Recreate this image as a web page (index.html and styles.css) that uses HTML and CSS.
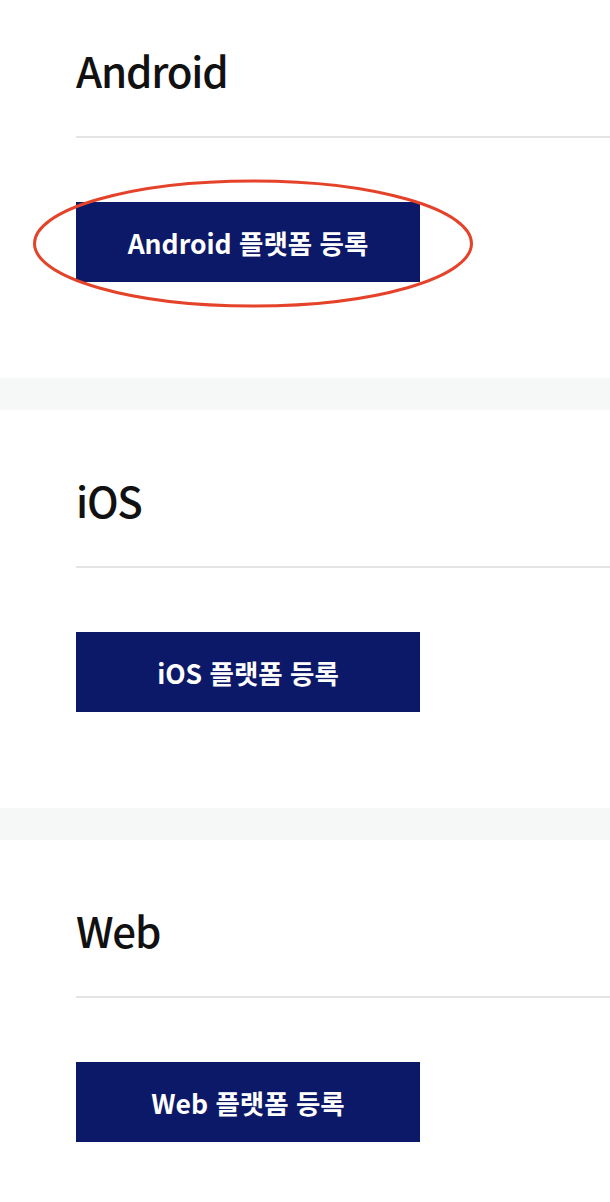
FILE: index.html
```html
<!DOCTYPE html>
<html lang="ko">

<head>
    <meta charset="UTF-8">
    <meta name="viewport" content="width=device-width, initial-scale=1.0">
    <title>플랫폼 등록</title>
    <link rel="stylesheet" href="styles.css">
</head>

<body>
    <div class="page">
        <section class="platform first">
            <h2 class="platform-title">Android</h2>
            <hr class="divider">
            <div class="btn-wrap">
                <button class="btn-register" type="button">Android 플랫폼 등록</button>
                <svg class="mark" width="442" height="131" viewBox="0 0 442 131">
                    <ellipse cx="221" cy="65.5" rx="218.5" ry="62.5" fill="none" stroke="#e4432a" stroke-width="3" />
                </svg>
            </div>
        </section>

        <section class="platform">
            <h2 class="platform-title">iOS</h2>
            <hr class="divider">
            <div class="btn-wrap">
                <button class="btn-register" type="button">iOS 플랫폼 등록</button>
            </div>
        </section>

        <section class="platform">
            <h2 class="platform-title">Web</h2>
            <hr class="divider">
            <div class="btn-wrap">
                <button class="btn-register" type="button">Web 플랫폼 등록</button>
            </div>
        </section>
    </div>
</body>

</html>
```

FILE: styles.css
```css
body {
    margin: 0;
    padding: 0;
    background: #f6f7f7;
    font-family: "Noto Sans CJK KR", "Noto Sans", sans-serif;
}

.page {
    display: flex;
    flex-direction: column;
    gap: 32px;
}

.platform {
    background: #ffffff;
    padding: 66px 0 96px 76px;
}

/* 첫 섹션은 위쪽이 스크롤로 잘려 있음 */
.platform.first {
    padding-top: 46px;
}

.platform-title {
    margin: 0;
    font-size: 42px;
    line-height: 48px;
    font-weight: 500;
    letter-spacing: -1.2px;
    color: #111111;
}

.divider {
    margin: 42px 0 0;
    border: 0;
    height: 2px;
    background: #e4e4e4;
}

.btn-wrap {
    position: relative;
    width: 344px;
    margin-top: 64px;
}

.btn-register {
    display: block;
    width: 344px;
    height: 80px;
    border: 0;
    padding: 0;
    background: #0c1968;
    color: #ffffff;
    font-family: "Noto Sans CJK KR", "Noto Sans", sans-serif;
    font-size: 26.5px;
    font-weight: 700;
}

.mark {
    position: absolute;
    left: -44px;
    top: -24px;
    pointer-events: none;
}
```
